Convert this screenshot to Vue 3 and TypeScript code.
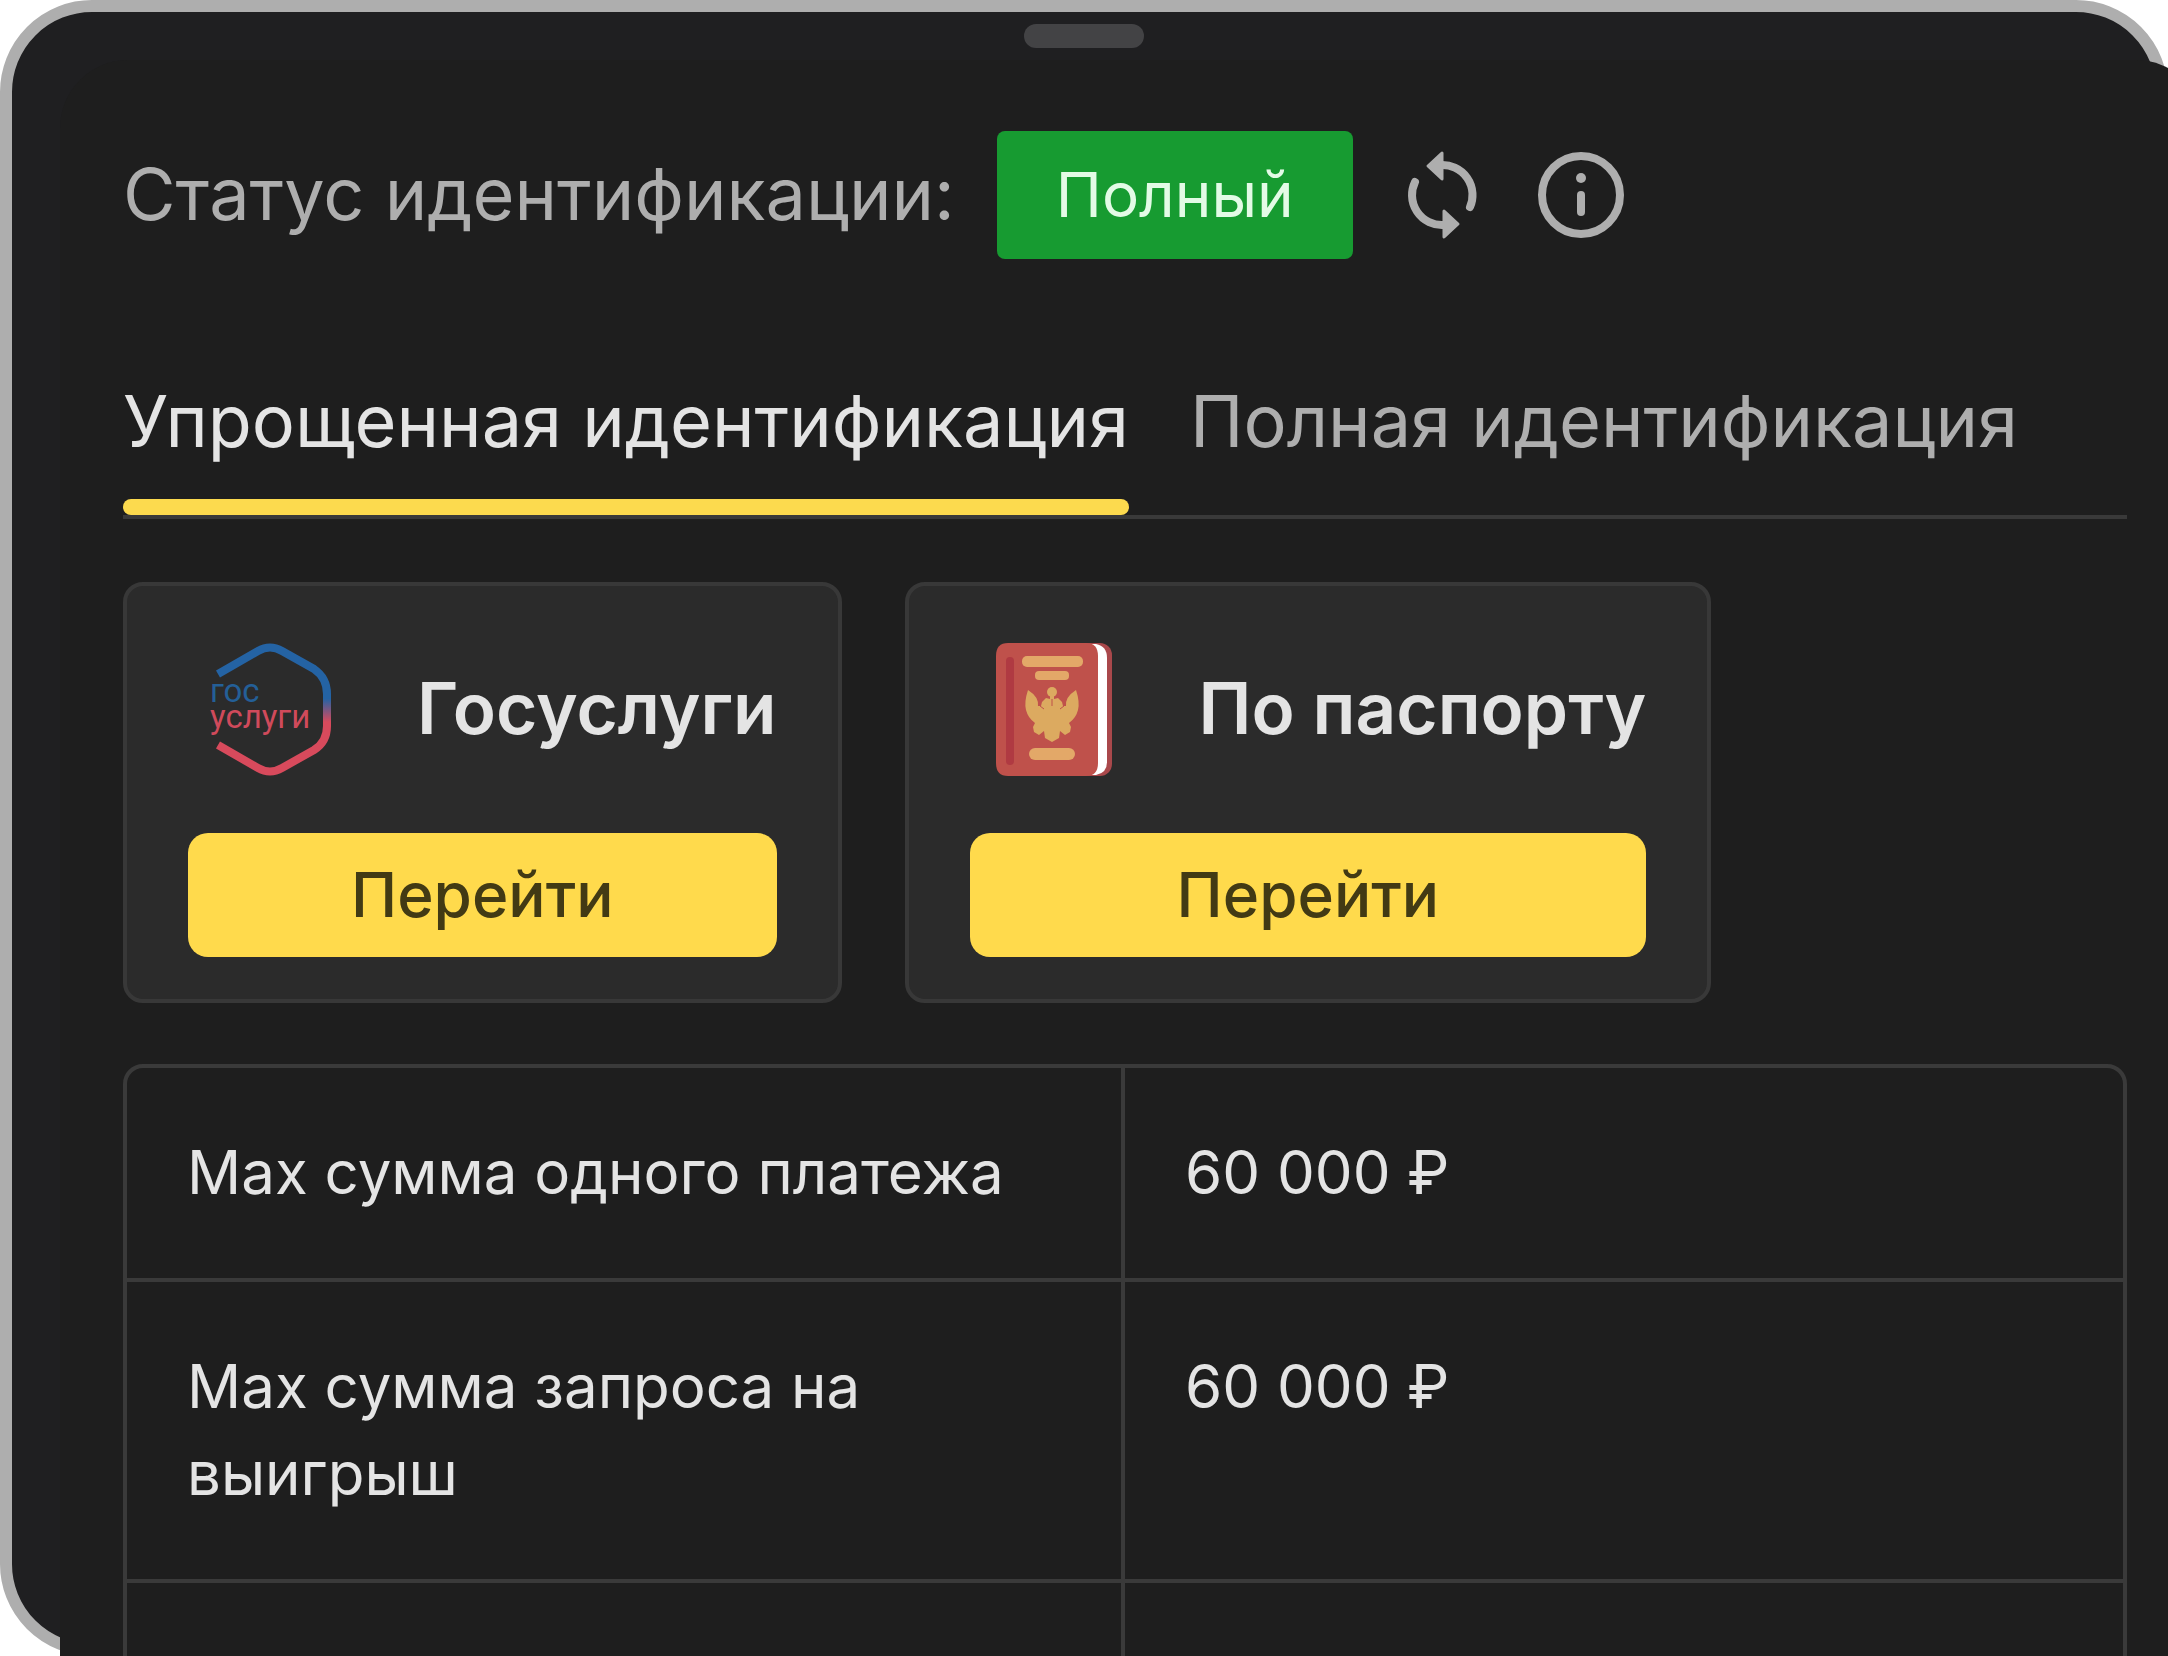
<script setup lang="ts">
import { ref } from 'vue'

interface Tab {
  id: string
  label: string
}

interface LimitRow {
  name: string
  value: string
}

const tabs: Tab[] = [
  { id: 'simple', label: 'Упрощенная идентификация' },
  { id: 'full', label: 'Полная идентификация' },
]

const limits: LimitRow[] = [
  { name: 'Мах сумма одного платежа', value: '60 000 ₽' },
  { name: 'Мах сумма запроса на выигрыш', value: '60 000 ₽' },
  { name: '', value: '' },
]

const activeTab = ref('simple')
</script>

<template>
  <div class="page">
    <div class="frame">
      <div class="handle"></div>
      <main class="sheet">
        <header class="status">
          <span class="status-label">Статус идентификации:</span>
          <span class="badge">Полный</span>
          <button class="icon-button" type="button" aria-label="Обновить">
            <svg viewBox="-48 -48 96 96" width="96" height="96" fill="none" stroke="currentColor" stroke-width="8">
              <path d="M-2 -30A30 30 0 0 1 27 12" stroke-linecap="round" />
              <path d="M0 30A30 30 0 0 1 -28 -13" stroke-linecap="round" />
              <path d="M-1 -42V-16L-15 -29Z" fill="currentColor" stroke-width="3" stroke-linejoin="round" />
              <path d="M1 42V16L15 29Z" fill="currentColor" stroke-width="3" stroke-linejoin="round" />
            </svg>
          </button>
          <button class="icon-button" type="button" aria-label="Информация">
            <svg viewBox="-48 -48 96 96" width="96" height="96" fill="none" stroke="currentColor" stroke-width="8">
              <circle r="39" />
              <circle cy="-17" r="5" fill="currentColor" stroke="none" />
              <path d="M0 0V17" stroke-linecap="round" />
            </svg>
          </button>
        </header>

        <div class="tabs" role="tablist">
          <button
            v-for="tab in tabs"
            :key="tab.id"
            class="tab"
            :class="{ active: tab.id === activeTab }"
            type="button"
            role="tab"
            :aria-selected="tab.id === activeTab"
            @click="activeTab = tab.id"
          >
            {{ tab.label }}
          </button>
        </div>

        <section class="cards">
          <article class="card">
            <div class="card-head">
              <svg class="card-icon" viewBox="-2 21 160 136" aria-hidden="true">
                <defs>
                  <linearGradient id="gos" gradientUnits="userSpaceOnUse" x1="0" y1="24" x2="0" y2="154">
                    <stop offset="0" stop-color="#2463a4" />
                    <stop offset="0.42" stop-color="#2463a4" />
                    <stop offset="0.6" stop-color="#d84a5c" />
                    <stop offset="1" stop-color="#d84a5c" />
                  </linearGradient>
                </defs>
                <path
                  d="M28 54L68 31Q80 24 92 31L124 49Q137 58 137 74V106Q137 122 124 130L92 148Q80 155 68 148L28 125"
                  fill="none" stroke="url(#gos)" stroke-width="8"
                />
                <text class="logo-text">
                  <tspan x="20" y="82" fill="#245f97">гос</tspan>
                  <tspan x="20" y="108" fill="#d04a5b">услуги</tspan>
                </text>
              </svg>
              <h2 class="card-title">Госуслуги</h2>
            </div>
            <button class="go" type="button">Перейти</button>
          </article>

          <article class="card">
            <div class="card-head">
              <svg class="card-icon" viewBox="-2 21 160 136" aria-hidden="true">
                <rect x="60" y="23" width="80" height="133" rx="12" fill="#a9484b" />
                <path d="M100 24H124Q135 26 135 38V142Q135 153 124 155H100Z" fill="#fff" />
                <path d="M36 23H114Q126 23 126 36V143Q126 156 114 156H36Q24 156 24 143V36Q24 23 36 23Z" fill="#bf514b" />
                <rect x="34" y="37" width="8" height="108" rx="4" fill="#b03a42" />
                <g fill="#e3a868">
                  <rect x="50" y="36" width="61" height="11" rx="5" />
                  <rect x="63" y="51" width="34" height="9" rx="4" />
                  <rect x="57" y="128" width="46" height="12" rx="6" />
                </g>
                <g fill="#dcaa60">
                  <circle cx="80" cy="72" r="5" />
                  <path d="M78 75H82V79L86 78L90 82L91 86L94 86Q93 77 104 70Q108 82 106 90Q104 98 97 103L99 107L98 112L93 115L88 111L87 118L80 122L73 118L72 111L67 115L62 112L61 107L63 103Q56 98 54 90Q52 82 56 70Q67 77 66 86L69 86L70 82L74 78L78 79Z" />
                </g>
                <path d="M80 79V86M68 86L72 89M92 86L88 89" stroke="#bf514b" stroke-width="1" />
              </svg>
              <h2 class="card-title">По паспорту</h2>
            </div>
            <button class="go" type="button">Перейти</button>
          </article>
        </section>

        <div class="limits">
          <table>
            <tbody>
              <tr v-for="(row, index) in limits" :key="index">
                <th scope="row">{{ row.name }}</th>
                <td>{{ row.value }}</td>
              </tr>
            </tbody>
          </table>
        </div>
      </main>
    </div>
  </div>
</template>

<style>
body {
  margin: 0;
  background: #fff;
}
</style>

<style scoped>
* {
  box-sizing: border-box;
}

.page {
  height: 100vh;
  overflow: hidden;
  font-family: Inter, Roboto, sans-serif;
  color: #e4e4e4;
}

.frame {
  position: relative;
  height: 100%;
  padding-top: 48px;
  border: 12px solid #aeaeae;
  border-radius: 92px;
  background: #1f1f21;
}

.handle {
  position: absolute;
  top: 12px;
  left: 50%;
  width: 120px;
  height: 24px;
  margin-left: -60px;
  border-radius: 12px;
  background: #434345;
}

.sheet {
  margin: 0 -48px 0 48px;
  padding: 71px 77px 0 63px;
  border-radius: 68px 68px 0 0;
  background: #1e1e1e;
}

button {
  margin: 0;
  padding: 0;
  border: 0;
  background: none;
  color: inherit;
  font: inherit;
}

.status {
  display: flex;
  align-items: center;
  gap: 42px;
  height: 128px;
  color: #aeaeae;
}

.status-label {
  padding-bottom: 4px;
  font-size: 72px;
  white-space: nowrap;
}

.badge {
  padding: 0 59px;
  border-radius: 8px;
  background: #179b31;
  color: #e3fbe6;
  font-size: 62px;
  line-height: 128px;
}

.icon-button,
.icon-button svg {
  display: block;
}

.tabs {
  display: flex;
  gap: 61px;
  margin-top: 114px;
  border-bottom: 4px solid #393939;
}

.tab {
  position: relative;
  padding-bottom: 46px;
  color: #aeaeae;
  font-size: 72px;
  line-height: 96px;
  white-space: nowrap;
}

.tab.active {
  color: #e4e4e4;
}

.tab.active::after {
  content: "";
  position: absolute;
  right: 0;
  bottom: 0;
  left: 0;
  height: 16px;
  border-radius: 8px;
  background: #fcda4e;
}

.cards {
  display: flex;
  gap: 63px;
  margin-top: 63px;
}

.card {
  padding: 55px 61px 42px;
  border: 4px solid #383838;
  border-radius: 20px;
  background: #2b2b2b;
}

.card-head {
  display: flex;
  align-items: center;
  gap: 69px;
}

.card-icon {
  flex: none;
  width: 160px;
  height: 136px;
}

.logo-text {
  font-family: Roboto, sans-serif;
  font-size: 33px;
  font-weight: 400;
}

.card-title {
  margin: 0;
  padding-bottom: 2px;
  font-size: 71px;
  font-weight: 600;
  line-height: 96px;
  white-space: nowrap;
}

.go {
  display: block;
  width: 100%;
  margin-top: 56px;
  border-radius: 20px;
  background: #ffda4c;
  color: #423a14;
  font-size: 62px;
  font-weight: 500;
  line-height: 124px;
}

.limits {
  margin-top: 61px;
  border: 4px solid #3a3a3a;
  border-radius: 20px;
}

table {
  width: 100%;
  border-collapse: separate;
  border-spacing: 0;
  table-layout: fixed;
}

th,
td {
  height: 214px;
  padding: 61px 60px 62px;
  border-bottom: 4px solid #3a3a3a;
  font-size: 60px;
  font-weight: 400;
  line-height: 87px;
  text-align: left;
  vertical-align: top;
}

th {
  border-right: 4px solid #3a3a3a;
}
</style>
